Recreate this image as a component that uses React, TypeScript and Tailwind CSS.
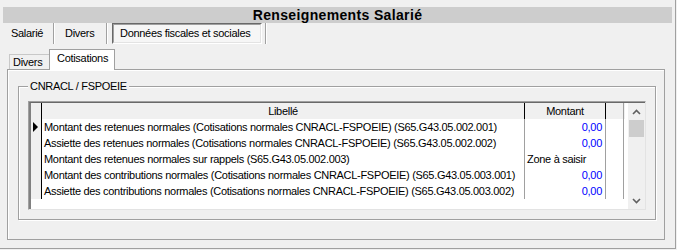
import React from "react";

const rows = [
  { l: "Montant des retenues normales (Cotisations normales CNRACL-FSPOEIE) (S65.G43.05.002.001)", m: "0,00", blue: true, cur: true },
  { l: "Assiette des retenues normales (Cotisations normales CNRACL-FSPOEIE) (S65.G43.05.002.002)", m: "0,00", blue: true },
  { l: "Montant des retenues normales sur rappels (S65.G43.05.002.003)", m: "Zone à saisir", blue: false },
  { l: "Montant des contributions normales (Cotisations normales CNRACL-FSPOEIE) (S65.G43.05.003.001)", m: "0,00", blue: true },
  { l: "Assiette des contributions normales (Cotisations normales CNRACL-FSPOEIE) (S65.G43.05.003.002)", m: "0,00", blue: true },
];

export default function App() {
  return (
    <div
      className="w-[677px] h-[250px] bg-[#f0f0f0] overflow-hidden text-[11px] tracking-[-0.3px] text-black"
      style={{ fontFamily: '"Liberation Sans", Arial, sans-serif' }}
    >
      <div className="w-[676px] h-[249px] border-r border-b border-[#a0a0a0] pt-[7px] pl-[3px] flex flex-col">
        {/* Title bar */}
        <div className="w-[669px] h-[16px] bg-[#cdcdcd] flex items-center justify-center text-[14px] font-bold tracking-[0.35px] leading-none">
          Renseignements Salarié
        </div>

        {/* Top tabs */}
        <div className="h-[21px] flex items-stretch">
          <div className="w-[51px] border-r border-[#a0a0a0] pl-[8px] flex items-center">Salarié</div>
          <div className="w-[53px] border-l border-white border-r border-r-[#a0a0a0] pl-[10px] flex items-center">Divers</div>
          <div className="w-[1px] bg-white" />
          <div className="ml-[4px] w-[150px] border-t border-l border-[#696969] border-r border-b border-r-white border-b-white flex">
            <div className="flex-1 border-t border-l border-[#a0a0a0] border-r border-b border-r-[#e3e3e3] border-b-[#e3e3e3] bg-[#f6f6f6] pl-[6px] flex items-center">
              Données fiscales et sociales
            </div>
          </div>
          <div className="ml-[3px] w-[1px] bg-[#a0a0a0]" />
          <div className="w-[1px] bg-white" />
        </div>

        {/* Second tabs */}
        <div className="h-[25px] flex items-end pl-[6px]">
          <div className="w-[40px] h-[15px] border-t border-l border-[#c8c8c8] bg-[#f0f0f0] pl-[3px] flex items-center">
            Divers
          </div>
          <div className="relative z-10 -mb-[1px] w-[66px] h-[21px] border-t border-l border-r border-[#a0a0a0] bg-white pl-[7px] pb-[3px] flex items-center">
            Cotisations
          </div>
        </div>

        {/* Tab page */}
        <div className="ml-[4px] w-[658px] h-[171px] border border-[#a0a0a0] shadow-[inset_1px_1px_0_#ffffff] bg-[#f0f0f0]">
          {/* Group box */}
          <div className="relative ml-[10px] mt-[16px] w-[638px] h-[134px] border border-[#a0a0a0] shadow-[inset_1px_1px_0_#ffffff,1px_1px_0_#ffffff]">
            <div className="absolute left-[9px] -top-[8px] px-[2px] bg-[#f0f0f0] leading-[14px]">CNRACL / FSPOEIE</div>

            {/* Grid */}
            <div className="ml-[9px] mt-[14px] w-[618px] h-[109px] border-t border-l border-[#a0a0a0] border-r border-b border-r-[#e3e3e3] border-b-[#e3e3e3] bg-white">
              <div className="h-full border-t border-[#696969] border-l-2 border-l-[#808080] flex">
                <div className="flex flex-col w-[596px]">
                  {/* Header */}
                  <div className="flex h-[16px] bg-[#f0f0f0]">
                    <div className="w-[11px] border-r border-black" />
                    <div className="w-[483px] border-r border-black flex items-center justify-center">Libellé</div>
                    <div className="w-[81px] border-r border-black flex items-center justify-center">Montant</div>
                    <div className="w-[18px] border-r border-[#a0a0a0]" />
                  </div>
                  {rows.map((r, i) => (
                    <div key={i} className="flex h-[16px] bg-white">
                      <div className="w-[11px] border-r border-black bg-[#f0f0f0] flex items-center pl-[2px]">
                        {r.cur && (
                          <div className="w-0 h-0 border-y-[5px] border-y-transparent border-l-[5px] border-l-black" />
                        )}
                      </div>
                      <div className="w-[483px] border-r border-[#a0a0a0] pl-[2px] flex items-center whitespace-nowrap overflow-hidden">
                        {r.l}
                      </div>
                      <div
                        className={
                          r.blue
                            ? "w-[81px] border-r border-[#a0a0a0] pr-[3px] flex items-center justify-end text-[#0000ff]"
                            : "w-[81px] border-r border-[#a0a0a0] pl-[2px] flex items-center whitespace-nowrap"
                        }
                      >
                        {r.m}
                      </div>
                      <div className="w-[18px] border-r border-[#a0a0a0]" />
                    </div>
                  ))}
                </div>
                {/* Scrollbar */}
                <div className="ml-[3px] w-[17px] h-full bg-[#f0f0f0] flex flex-col items-center">
                  <div className="h-[17px] w-full flex items-center justify-center">
                    <svg width="9" height="6" viewBox="0 0 9 6">
                      <path d="M1 5 L4.5 1.5 L8 5" stroke="#606060" strokeWidth="1.6" fill="none" />
                    </svg>
                  </div>
                  <div className="w-[15px] h-[17px] bg-[#cdcdcd]" />
                  <div className="flex-1" />
                  <div className="h-[17px] w-full flex items-center justify-center">
                    <svg width="9" height="6" viewBox="0 0 9 6">
                      <path d="M1 1 L4.5 4.5 L8 1" stroke="#606060" strokeWidth="1.6" fill="none" />
                    </svg>
                  </div>
                </div>
              </div>
            </div>
          </div>
        </div>
      </div>
    </div>
  );
}
